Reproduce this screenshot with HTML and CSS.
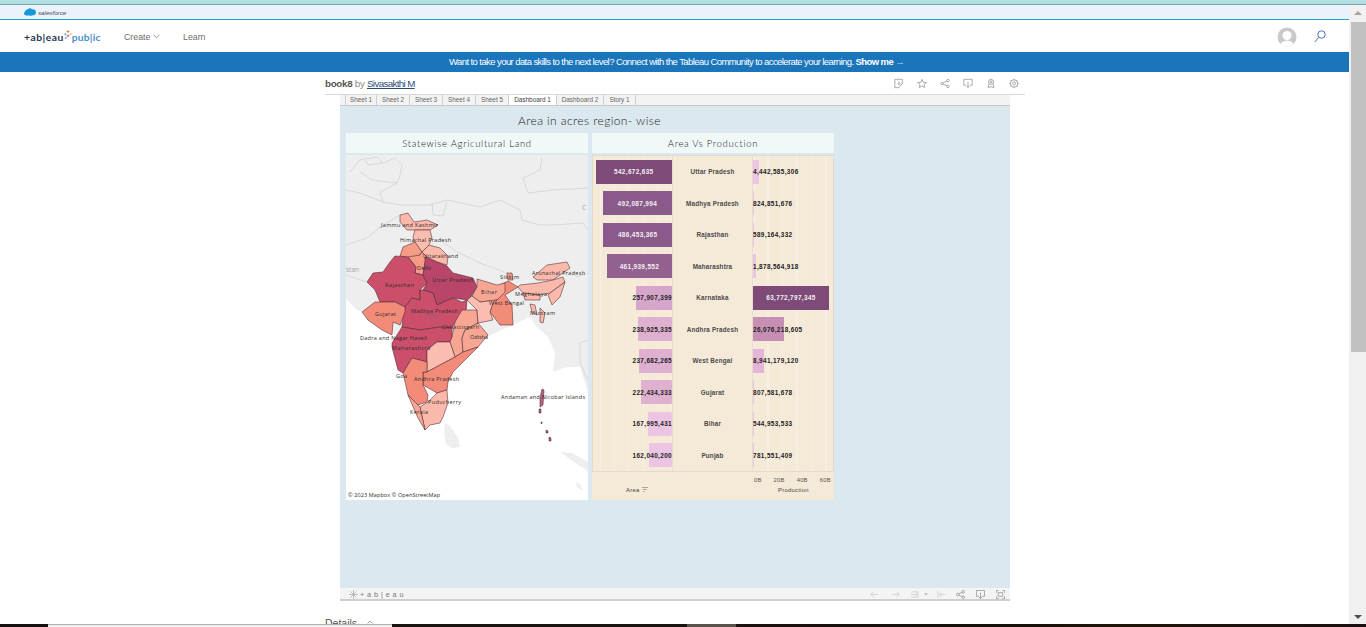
FILE: index.html
```html
<!DOCTYPE html>
<html lang="en">
<head>
<meta charset="utf-8">
<title>book8 - Tableau Public</title>
<link rel="stylesheet" href="styles.css">
</head>
<body>
<div class="page">
  <div class="top-strip"></div>
  <div class="main">
    <div class="content">
      <div class="sf-bar">
        <svg class="sf-cloud" viewBox="0 0 12 8"><path d="M2.600 7.600C1 7.600 0 6.600 0 5.300c0-1 .6-1.800 1.500-2.100C1.700 1.800 2.800 1 4 1.200 4.600.5 5.400 0 6.300.2c.8.1 1.400.6 1.700 1.200 1.900-.4 4 .9 4 3 0 1.800-1.500 3-3.200 2.800-.5.5-1.300.6-2 .2-.7.5-1.700.5-2.300-.1-.6.3-1.300.4-1.900.3z"/></svg>
        <span class="sf-name">salesforce</span>
      </div>
      <nav class="nav">
        <div class="logo"><span class="logo-dark">+ab|eau</span><svg class="logo-mark" viewBox="0 0 9 11"><path class="lm-a" d="M4.500 0v3M3 1.500h3"/><path class="lm-b" d="M1.500 3.500v2.500M.5 4.700h2"/><path class="lm-c" d="M4.500 5v3M3 6.500h3"/><path class="lm-d" d="M7.500 3.500v2M6.500 4.500h2"/><path class="lm-b" d="M2 8v2M1 9h2"/></svg><span class="logo-blue">pub|ic</span></div>
        <a class="nav-link nav-create">Create <svg class="chev" viewBox="0 0 8 5"><path d="M.5.500 4 4 7.500.5"/></svg></a>
        <a class="nav-link">Learn</a>
        <div class="nav-right">
          <svg class="avatar" viewBox="0 0 20 20"><defs><clipPath id="av"><circle cx="10" cy="10" r="9.500"/></clipPath></defs><circle class="av-bg" cx="10" cy="10" r="9.500"/><g clip-path="url(#av)"><circle class="av-fg" cx="10" cy="8.500" r="4.500"/><ellipse class="av-fg" cx="10" cy="19" rx="7" ry="5.500"/></g></svg>
          <svg class="search" viewBox="0 0 12 13"><circle cx="7.500" cy="4.500" r="3.700"/><path d="M4.800 7.300 .8 12"/></svg>
        </div>
      </nav>
      <div class="banner">Want to take your data skills to the next level? Connect with the Tableau Community to accelerate your learning. <b>Show me</b> <span class="arrow">→</span></div>
      <div class="viz-wrap">
        <div class="viz-head">
          <div class="viz-title"><b>book8</b> <span class="by">by</span> <a class="author">Sivasakthi M</a></div>
          <div class="viz-icons">
            <svg class="hi" viewBox="0 0 12 12"><path d="M1 1h9v5l-4 5H1zM6 3.500v4M4.500 6 6 7.500 7.500 6"/></svg>
            <svg class="hi" viewBox="0 0 12 12"><path d="M6 1l1.500 3.500 3.700.3-2.800 2.400.9 3.600L6 8.900l-3.300 1.900.9-3.600L.8 4.800l3.700-.3z"/></svg>
            <svg class="hi" viewBox="0 0 12 12"><circle cx="2.500" cy="6" r="1.500"/><circle cx="9.500" cy="2.500" r="1.500"/><circle cx="9.500" cy="9.500" r="1.500"/><path d="M3.800 5.300 8.200 3.200M3.800 6.700l4.400 2.100"/></svg>
            <svg class="hi" viewBox="0 0 12 12"><path d="M3.500 8H1V1h10v7H8.500M6 4v6.500M4 8.500l2 2.200 2-2.200"/></svg>
            <svg class="hi" viewBox="0 0 12 12"><circle cx="6" cy="4" r="3"/><circle cx="6" cy="4" r="1.200"/><path d="M3.500 6.500 2.500 11l3.500-1.200L9.500 11l-1-4.500"/></svg>
            <svg class="hi" viewBox="0 0 12 12"><circle cx="6" cy="6" r="4.500"/><circle cx="6" cy="6" r="1.800"/><path d="M6 .5v1.500M6 10v1.500M.5 6H2M10 6h1.500M2.100 2.100l1 1M8.900 8.900l1 1M2.100 9.900l1-1M8.900 3.100l1-1"/></svg>
          </div>
        </div>
        <div class="viz">
          <div class="tabs">
            <span class="tab">Sheet 1</span><span class="tab">Sheet 2</span><span class="tab">Sheet 3</span><span class="tab">Sheet 4</span><span class="tab">Sheet 5</span><span class="tab tab-on">Dashboard 1</span><span class="tab tab-wide">Dashboard 2</span><span class="tab">Story 1</span>
          </div>
          <div class="dash">
            <h1 class="dash-title">Area in acres region- wise</h1>
            <div class="panels">
              <section class="panel">
                <h2 class="panel-title">Statewise Agricultural Land</h2>
                <svg class="map" viewBox="346 155 242 345">
                  <rect class="sea" x="346" y="155" width="242" height="345"/>
                  <path class="land" d="M346 155H588V392L585 382 580 367 567 367 553 372 555 353 548 337 537 327 530 317 513 325 480 340 440 370 420 370 410 350 395 335 380 322 365 312 357 310 346 299Z"/>
                  <path class="land" d="M560 452 572 453 588 462V471L575 463ZM575 482 580 484 583 491 578 488ZM445 423 450 426 458 438 460 447 452 448 446 444 444 432Z"/>
                  <path class="bd" d="M350 172 360 160 377 157 383 163 395 158 402 165 400 175 397 183 380 192 383 202 400 205 430 205 447 200 480 207 500 200 520 210 522 220 540 225 553 225 583 223 588 230M542 158 540 170 523 178 528 193 553 190 588 188M346 190 360 193 383 202M400 215 380 227 367 238 346 245M440 240 457 252 480 263 507 273M432 203 433 215 443 216 447 202M365 160 368 165 383 163M570 270 577 277 588 273M588 340 580 343 580 363 588 380M346 275 367 282M360 172 372 180 397 183"/>
                  <path class="st c3" d="M400 215 408 213 414 222 427 220 438 225 430 230 415 230 407 230 400 222Z"/>
                  <path class="st c2" d="M415 230 430 230 432 238 429 245 422 252 415 243 413 237Z"/>
                  <path class="st c5" d="M403 247 415 242 422 252 420 255 413 258 400 256Z"/>
                  <path class="st c3" d="M429 245 440 248 448 256 447 265 437 262 427 257 422 252Z"/>
                  <path class="st c5" d="M408 257 420 255 422 252 427 257 425 262 423 275 415 273 416 267Z"/>
                  <path class="st c8" d="M395 256 408 257 416 267 415 273 423 275 427 283 420 290 420 300 412 298 405 307 395 302 380 302 375 290 367 282 373 273 383 272 390 262Z"/>
                  <path class="st c9" d="M425 257 437 262 447 266 453 273 473 278 477 287 472 295 467 300 453 298 437 305 433 293 423 290 427 283 423 275 425 262Z"/>
                  <path class="st c8" d="M405 307 412 298 420 300 420 290 423 290 433 293 437 305 453 298 462 302 467 300 466 312 455 322 452 328 440 327 420 330 402 327 403 315Z"/>
                  <path class="st c8" d="M392 343 402 327 420 330 440 327 452 328 452 337 450 342 437 342 427 350 427 362 412 358 403 373 398 370 392 347Z"/>
                  <path class="st c6" d="M362 312 375 302 395 302 405 307 405 312 400 325 393 322 392 335 382 330 368 320Z"/>
                  <path class="st c4" d="M452 337 455 322 462 310 477 310 478 323 465 330 462 338 463 352 455 357 450 342Z"/>
                  <path class="st c2" d="M427 350 437 342 450 342 455 357 440 365 427 372Z"/>
                  <path class="st c4" d="M462 338 465 330 478 323 488 335 478 347 463 352Z"/>
                  <path class="st c6" d="M478 347 463 352 455 357 440 365 427 372 423 372 423 385 437 393 447 390 448 382 453 372Z"/>
                  <path class="st c6" d="M403 373 412 358 427 362 427 372 423 372 423 385 428 395 427 402 418 405 408 395Z"/>
                  <path class="st c3" d="M428 402 437 393 447 390 448 403 443 417 440 423 430 425 425 430 420 407Z"/>
                  <path class="st c4" d="M408 395 418 405 420 407 425 430 418 418Z"/>
                  <path class="st c6" d="M500 285 508 281 518 287 510 292 505 295 512 305 513 325 500 325 490 312 493 303 497 298Z"/>
                  <path class="st c4" d="M477 279 497 285 505 283 505 292 497 300 480 302 472 296 477 287Z"/>
                  <path class="st c2" d="M472 296 480 302 497 300 493 303 490 312 493 320 478 323 477 310 467 300Z"/>
                  <path class="st c3" d="M533 277 547 265 567 262 570 268 553 280 537 280Z"/>
                  <path class="st c3" d="M518 287 520 285 538 283 553 280 563 277 565 282 550 293 540 295 523 293Z"/>
                  <path class="st c3" d="M523 293 540 295 540 300 525 300Z"/>
                  <path class="st c3" d="M550 293 565 282 560 297 552 305 548 295Z"/>
                  <path class="st c3" d="M540 308 545 313 543 323 540 322Z"/>
                  <path class="st c3" d="M530 304 535 305 537 315 532 312Z"/>
                  <path class="st c5" d="M507 273 512 273 513 280 508 280Z"/>
                  <path class="st c7" d="M542 389 544 390 543 405 540 407 540 398Z"/>
                  <path class="st c7" d="M539 409 541 409 541 413 539 413ZM541 422h1v1.500h-1ZM546 430 548 431 548 433 546 433ZM549 437 551 438 551 441 549 441Z"/>
                  <text class="lb" x="381" y="227" textLength="57">Jammu and Kashmir</text>
                  <text class="lb" x="400" y="242" textLength="51">Himachal Pradesh</text>
                  <text class="lb" x="423" y="258" textLength="35">Uttarakhand</text>
                  <text class="lb" x="417" y="270" textLength="14">Delhi</text>
                  <text class="lb" x="385" y="287" textLength="29">Rajasthan</text>
                  <text class="lb" x="432" y="282" textLength="41">Uttar Pradesh</text>
                  <text class="lb" x="500" y="279" textLength="19">Sikkim</text>
                  <text class="lb" x="532" y="275" textLength="53">Arunachal Pradesh</text>
                  <text class="lb" x="481" y="294" textLength="16">Bihar</text>
                  <text class="lb" x="515" y="296" textLength="32">Meghalaya</text>
                  <text class="lb" x="489" y="305" textLength="35">West Bengal</text>
                  <text class="lb" x="375" y="316" textLength="21">Gujarat</text>
                  <text class="lb" x="411" y="313" textLength="47">Madhya Pradesh</text>
                  <text class="lb" x="530" y="315" textLength="25">Mizoram</text>
                  <text class="lb" x="442" y="329" textLength="37">Chhattisgarh</text>
                  <text class="lb" x="470" y="339" textLength="18">Odisha</text>
                  <text class="lb" x="360" y="340" textLength="67">Dadra and Nagar Haveli</text>
                  <text class="lb" x="392" y="350" textLength="38">Maharashtra</text>
                  <text class="lb" x="396" y="378" textLength="11">Goa</text>
                  <text class="lb" x="414" y="381" textLength="45">Andhra Pradesh</text>
                  <text class="lb" x="501" y="399" textLength="84">Andaman and Nicobar Islands</text>
                  <text class="lb" x="428" y="404" textLength="33">Puducherry</text>
                  <text class="lb" x="410" y="414" textLength="18">Kerala</text>
                  <text class="lb-map" x="346" y="272">stan</text>
                  <text class="lb-map" x="582" y="210">C</text>
                  <text class="lb-india" x="424" y="317">India</text>
                  <text class="lb" x="348" y="497" textLength="92">© 2023 Mapbox  © OpenStreetMap</text>
                </svg>
              </section>
              <section class="panel">
                <h2 class="panel-title">Area Vs Production</h2>
                <div class="chart">
                  <div class="rows">
                    <div class="row"><div class="cell-l"><div class="bar bar-in b-9" style="width:76.500px">542,672,635</div></div><div class="state">Uttar Pradesh</div><div class="cell-r"><div class="bar b-1" style="width:5.500px">4,442,585,306</div></div></div>
                    <div class="row"><div class="cell-l"><div class="bar bar-in b-8" style="width:69.400px">492,087,994</div></div><div class="state">Madhya Pradesh</div><div class="cell-r"><div class="bar b-1" style="width:.6px">824,851,676</div></div></div>
                    <div class="row"><div class="cell-l"><div class="bar bar-in b-8" style="width:68.600px">486,453,365</div></div><div class="state">Rajasthan</div><div class="cell-r"><div class="bar b-1" style="width:.4px">589,164,332</div></div></div>
                    <div class="row"><div class="cell-l"><div class="bar bar-in b-7" style="width:65.200px">461,939,552</div></div><div class="state">Maharashtra</div><div class="cell-r"><div class="bar b-1" style="width:2.500px">1,878,564,918</div></div></div>
                    <div class="row"><div class="cell-l"><div class="bar b-4" style="width:36.400px">257,907,399</div></div><div class="state">Karnataka</div><div class="cell-r"><div class="bar bar-in b-9" style="width:76px">63,772,797,345</div></div></div>
                    <div class="row"><div class="cell-l"><div class="bar b-3" style="width:33.700px">238,925,335</div></div><div class="state">Andhra Pradesh</div><div class="cell-r"><div class="bar b-5" style="width:31px">26,076,218,605</div></div></div>
                    <div class="row"><div class="cell-l"><div class="bar b-3" style="width:33.500px">237,682,265</div></div><div class="state">West Bengal</div><div class="cell-r"><div class="bar b-2" style="width:10.500px">8,941,179,120</div></div></div>
                    <div class="row"><div class="cell-l"><div class="bar b-3" style="width:31.400px">222,434,333</div></div><div class="state">Gujarat</div><div class="cell-r"><div class="bar b-1" style="width:.6px">807,581,678</div></div></div>
                    <div class="row"><div class="cell-l"><div class="bar b-1" style="width:23.700px">167,995,431</div></div><div class="state">Bihar</div><div class="cell-r"><div class="bar b-1" style="width:.4px">544,953,533</div></div></div>
                    <div class="row"><div class="cell-l"><div class="bar b-1" style="width:22.900px">162,040,200</div></div><div class="state">Punjab</div><div class="cell-r"><div class="bar b-1" style="width:.6px">781,551,409</div></div></div>
                  </div>
                  <div class="axis">
                    <div class="ticks"><span>0B</span><span>20B</span><span>40B</span><span>60B</span></div>
                    <div class="axis-titles">
                      <span class="at-area">Area <svg class="sort" viewBox="0 0 6 6"><path d="M0 .5h6M1 2.500h3.500M1 4.500h1.500"/></svg></span>
                      <span class="at-prod">Production</span>
                    </div>
                  </div>
                </div>
              </section>
            </div>
          </div>
          <div class="viz-bar">
            <div class="brand">
              <svg class="brand-mark" viewBox="0 0 10 10"><path d="M5 0v10M0 5h10M1.500 1.500l7 7M8.500 1.500l-7 7"/></svg>
              <span>+ a b | e a u</span>
            </div>
            <div class="tools">
              <svg class="ti ti-a ti-first" viewBox="0 0 10 10"><path d="M9 5H1M4 2 1 5l3 3"/></svg>
              <svg class="ti ti-a" viewBox="0 0 10 10"><path d="M1 5h8M6 2l3 3-3 3"/></svg>
              <svg class="ti ti-a" viewBox="0 0 10 10"><path d="M1 5h7M6 3l2 2-2 2M2 3V2h7v6H2V7"/></svg>
              <svg class="ti-drop" viewBox="0 0 5 3"><path d="M0 0h5L2.500 3z"/></svg>
              <svg class="ti ti-a" viewBox="0 0 10 10"><path d="M1 1v8M9 5H2.500M5 2.500 2.500 5 5 7.500"/></svg>
              <svg class="ti" viewBox="0 0 10 10"><circle cx="2" cy="5" r="1.500"/><circle cx="8" cy="2" r="1.500"/><circle cx="8" cy="8" r="1.500"/><path d="M3.300 4.300 6.700 2.700M3.300 5.700l3.400 1.600"/></svg>
              <svg class="ti ti-far" viewBox="0 0 10 10"><path d="M3 7H.5V.5h9V7H7M5 3v6.500M3 7.500l2 2 2-2"/></svg>
              <svg class="ti ti-far" viewBox="0 0 10 10"><path d="M.5 3V.5H3M7 .5h2.500V3M.5 7v2.500H3M7 9.500h2.500V7M2.500 3h5v4h-5z"/></svg>
            </div>
          </div>
        </div>
        <div class="details">Details <svg class="chev-up" viewBox="0 0 6 4"><path d="M.5 3.500 3 1l2.500 2.500"/></svg></div>
      </div>
    </div>
    <div class="scrollbar">
      <span class="sb-up"></span>
      <span class="sb-thumb"></span>
      <span class="sb-down"></span>
    </div>
  </div>
  <div class="taskbar">
    <span class="tb-a"></span><span class="tb-b"></span><span class="tb-c"></span><span class="tb-d"></span><span class="tb-e"></span>
  </div>
</div>
</body>
</html>
```
FILE: styles.css
```css
* { box-sizing: border-box; }
html, body { margin: 0; height: 100%; overflow: hidden; background: #fff; }
body { font-family: "Liberation Sans", Arial, sans-serif; color: #333; }
a { color: inherit; }

.page { display: flex; flex-direction: column; height: 627px; width: 1366px; }
.top-strip { flex: 0 0 5px; background: #b2dfe3; border-bottom: 1px solid #78a4aa; }
.main { flex: 0 0 619px; display: flex; min-height: 0; }
.content { flex: 1; min-width: 0; overflow: hidden; }

.sf-bar { height: 15px; background: #eaf2fc; border-bottom: 1px solid #2f9ac9; display: flex; align-items: center; padding-left: 24px; gap: 2px; }
.sf-cloud { width: 12px; height: 8px; fill: #1798d8; }
.sf-name { font-size: 6.200px; font-style: italic; color: #3c4a55; }

.nav { height: 32px; display: flex; align-items: center; padding: 1px 0 0 24px; }
.logo { display: flex; align-items: center; width: 100px; font-family: "Lato", sans-serif; font-size: 10.300px; letter-spacing: .5px; }
.logo-dark { color: #1e3551; font-weight: 700; }
.logo-blue { color: #4a8fca; font-weight: 700; letter-spacing: .2px; }
.logo-mark { width: 8px; height: 10px; margin: -3px 0 0 0; fill: none; stroke-width: 1; }
.lm-a { stroke: #e8762c; }
.lm-b { stroke: #5b9bd0; }
.lm-c { stroke: #d9534f; }
.lm-d { stroke: #f0b33c; }
.nav-link { font-size: 8.800px; color: #6d6d6d; }
.nav-create { width: 59px; display: flex; align-items: center; gap: 3px; }
.chev { width: 7px; height: 5px; fill: none; stroke: #6d6d6d; stroke-width: .8; }
.nav-right { margin-left: auto; display: flex; align-items: center; gap: 17px; padding-right: 23px; }
.avatar { width: 20px; height: 20px; }
.av-bg { fill: #c9c9c9; }
.av-fg { fill: #fff; }
.search { width: 12px; height: 13px; fill: none; stroke: #4a74c0; stroke-width: 1; }

.banner { height: 20px; background: #1a75bb; color: #fff; font-size: 9.500px; line-height: 20px; letter-spacing: -.585px; padding-left: 449px; white-space: nowrap; }
.banner b { font-weight: 700; }
.arrow { color: #a9cfe9; }

.viz-wrap { width: 700px; margin: 0 0 0 325px; }
.viz-head { height: 23px; display: flex; align-items: center; justify-content: space-between; }
.viz-title { font-size: 9.800px; color: #8a8a8a; letter-spacing: -.3px; }
.viz-title b { color: #555; }
.author { color: #2d4d78; text-decoration: underline; letter-spacing: -.65px; }
.viz-icons { display: flex; gap: 13px; padding-right: 6px; }
.hi { width: 10px; height: 11px; fill: none; stroke: #8f8f8f; stroke-width: .9; }

.viz { margin: 0 15px; position: relative; }
.viz::before { content: ""; position: absolute; left: -15px; right: -15px; top: -1px; height: 1px; background: #d9d9d9; }
.tabs { height: 11px; background: #f3f3f3; border-bottom: 1px solid #c8c8c8; padding-left: 5px; display: flex; }
.tab { width: 33px; height: 10px; font-size: 6.400px; line-height: 10px; text-align: center; color: #666; border-right: 1px solid #cfcfcf; white-space: nowrap; }
.tab:first-child { width: 32px; border-left: 1px solid #cfcfcf; }
.tab-on { width: 48px; background: #fff; color: #444; }
.tab-wide { width: 47px; }
.tab:last-child { width: 32px; }

.dash { height: 482px; background: #dce8ef; padding: 4px 6px 0; }
.dash-title { margin: 0; height: 23px; font-family: "Lato", sans-serif; font-size: 12px; font-weight: 300; line-height: 21px; letter-spacing: .4px; color: #222; text-align: left; padding-left: 172px; white-space: nowrap; }
.panels { display: flex; gap: 4px; align-items: flex-start; }
.panel { width: 242px; }
.panel-title { margin: 0 0 2px; height: 20px; background: #f0f9f8; font-family: "Lato", sans-serif; font-size: 9.500px; font-weight: 300; letter-spacing: .7px; line-height: 21px; text-align: center; color: #222; }

.map { display: block; width: 242px; height: 345px; }
.sea { fill: #fff; }
.land { fill: #eeeeee; }
.bd { fill: none; stroke: #c9c9c9; stroke-width: .6; }
.st { stroke: #4c2430; stroke-width: .55; stroke-linejoin: round; }
.c2 { fill: #fbbdb0; }
.c3 { fill: #fbb9ab; }
.c4 { fill: #f8a694; }
.c5 { fill: #f59c87; }
.c6 { fill: #f38b79; }
.c7 { fill: #b9657a; }
.c8 { fill: #cb4f6b; }
.c9 { fill: #b94568; }
.lb { font-family: "Open Sans", sans-serif; font-size: 5.500px; fill: #2b2b2b; }
.lb-map { font-family: "Open Sans", sans-serif; font-size: 6.500px; fill: #a6a6a6; }
.lb-india { font-family: "Open Sans", sans-serif; font-size: 6px; fill: #a5566e; }

.chart { width: 242px; height: 345px; background: #f5e9d8; display: flex; flex-direction: column; }
.rows { height: 317px; border: 1px solid #e3dacd; display: flex; flex-direction: column; }
.row { flex: 1; display: grid; grid-template-columns: 80px 80px 1fr; align-items: stretch; min-height: 0; }
.cell-l, .cell-r { display: flex; align-items: center; }
.cell-l { justify-content: flex-end; border-right: 1px solid #e6dcd0; background: repeating-linear-gradient(to left, #f7efe3 0 1px, transparent 1px 14.200px); }
.cell-r { justify-content: flex-start; background: repeating-linear-gradient(to right, #f7efe3 0 1px, transparent 1px 14.500px); }
.state { display: flex; align-items: center; justify-content: center; border-right: 1px solid #e6dcd0; font-size: 6.300px; font-weight: 700; letter-spacing: .2px; color: #4a4a4a; white-space: nowrap; }
.bar { height: 24px; display: flex; align-items: center; flex: none; font-size: 6.400px; font-weight: 700; letter-spacing: .36px; color: #222; white-space: nowrap; }
.cell-l .bar { justify-content: flex-end; }
.cell-r .bar { justify-content: flex-start; }
.cell-l .bar-in, .cell-r .bar-in { color: #f4f0f4; justify-content: center; }
.b-1 { background: #ecc5e2; }
.b-2 { background: #e6b4d8; }
.b-3 { background: #dfb0d0; }
.b-4 { background: #d5a6c9; }
.b-5 { background: #c78fb3; }
.b-7 { background: #93618f; }
.b-8 { background: #8a5a8a; }
.b-9 { background: #7e4a78; }
.axis { flex: 1; color: #555; font-size: 5.800px; }
.ticks { display: flex; gap: 12px; padding: 5px 0 0 162px; letter-spacing: .25px; height: 15px; }
.axis-titles { display: flex; padding-left: 34px; letter-spacing: .3px; color: #444; }
.at-area { width: 152px; display: flex; align-items: center; gap: 3px; }
.sort { width: 6px; height: 6px; fill: none; stroke: #777; stroke-width: .6; }

.viz-bar { height: 13px; background: #f4f4f4; border-bottom: 2px solid #cfcfcf; display: flex; align-items: center; justify-content: space-between; padding: 2px 5px 0 9px; }
.brand { display: flex; align-items: center; gap: 2px; font-size: 7.200px; color: #777; letter-spacing: .45px; }
.brand-mark { width: 9px; height: 9px; fill: none; stroke: #aaa; stroke-width: .8; }
.tools { display: flex; align-items: center; gap: 10px; }
.ti { width: 9px; height: 9px; fill: none; stroke: #8a8a8a; stroke-width: .8; }
.ti-a { stroke: #c9c9c9; }
.ti-first { margin-right: 2px; }
.ti-far { margin-left: 1px; }
.ti-drop { width: 4px; height: 3px; margin: 0 -1px 0 -5px; fill: #bbb; }

.details { margin-top: 16px; font-size: 10.500px; color: #555; line-height: 12px; }
.chev-up { width: 6px; height: 4px; margin-left: 7px; vertical-align: 3px; fill: none; stroke: #888; stroke-width: .7; }

.scrollbar { flex: 0 0 17px; background: #f1f1f1; display: flex; flex-direction: column; align-items: center; padding-left: 2px; }
.sb-up, .sb-down { flex: none; width: 0; height: 0; border-left: 4px solid transparent; border-right: 4px solid transparent; }
.sb-up { border-bottom: 4px solid #a5a5a5; margin-top: 6px; margin-right: 2px; }
.sb-thumb { flex: none; width: 100%; height: 330px; margin-top: 7px; background: #c1c1c1; }
.sb-down { border-top: 4px solid #505050; margin-top: auto; margin-bottom: 5px; margin-right: 2px; }

.taskbar { flex: 0 0 3px; display: flex; background: #16110e; }
.tb-a { width: 48px; background: #16110e; }
.tb-b { width: 344px; background: #f0f0f0; border-top: 1px solid #b0b0b0; }
.tb-c { width: 295px; background: #1a1410; }
.tb-d { width: 49px; background: #5a534c; }
.tb-e { flex: 1; background: linear-gradient(90deg, #1c1110, #14100a 40%, #201408 60%, #1a1010); }
```
